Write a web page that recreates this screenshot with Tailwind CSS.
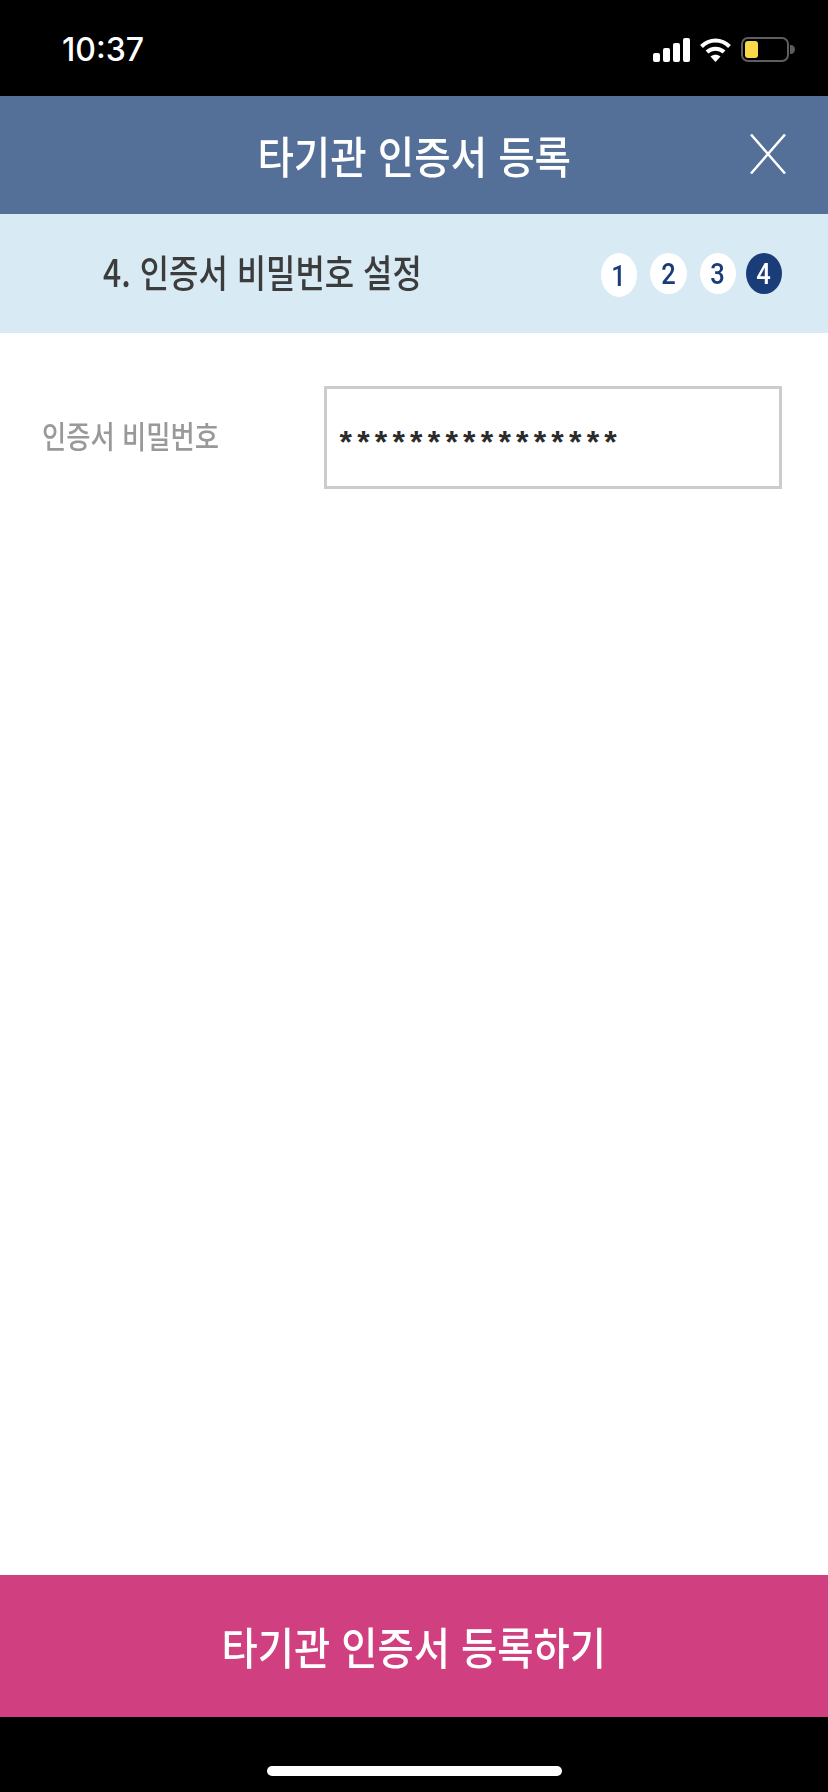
<!DOCTYPE html>
<html lang="ko">
<head>
    <meta charset="UTF-8">
    <meta name="viewport" content="width=device-width, initial-scale=1.0">
    <title>타기관 인증서 등록</title>
    <script src="https://cdn.jsdelivr.net/npm/@tailwindcss/browser@4"></script>
</head>
<body class="bg-black font-['Noto_Sans_CJK_KR','Noto_Sans',sans-serif]">
    <div class="flex flex-col w-[828px] h-[1792px] overflow-hidden">
        <!-- status bar -->
        <div class="flex items-center justify-between h-[96px] pl-[62px] pr-[33px] pt-[3px] bg-black">
            <span class="text-white text-[32px] leading-none font-medium font-['Inter',sans-serif] w-[84px]">10:37</span>
            <div class="flex items-center gap-[10px]">
                <svg width="37" height="24" viewBox="0 0 37 24" fill="#fff">
                    <rect x="0" y="15" width="7" height="9" rx="2"/>
                    <rect x="10" y="10" width="7" height="14" rx="2"/>
                    <rect x="20" y="5" width="7" height="19" rx="2"/>
                    <rect x="30" y="0" width="7" height="24" rx="2"/>
                </svg>
                <svg width="31" height="24" viewBox="0 0 31 24" fill="none" stroke="#fff" stroke-width="4">
                    <path d="M1.500 8.500C9.500 0.500 21.500 0.500 29.500 8.500"/>
                    <path d="M7 14C11.500 9.500 19.500 9.500 24 14"/>
                    <path d="M15.500 24L10.500 18.500C13.500 16 17.500 16 20.500 18.500Z" fill="#fff" stroke="none"/>
                </svg>
                <div class="flex items-center">
                    <div class="w-[48px] h-[25px] rounded-[7px] border-2 border-[#5e5e5e] p-[2px] flex">
                        <div class="w-[13px] h-full rounded-[3px] bg-[#fbd84a]"></div>
                    </div>
                    <div class="w-[5px] h-[9px] ml-[1px] rounded-r-full bg-[#5e5e5e]"></div>
                </div>
            </div>
        </div>

        <!-- title bar -->
        <div class="relative flex items-center justify-center h-[118px] bg-[#546f98]">
            <h1 class="text-white text-[44px] font-medium leading-none scale-x-[0.9] blur-[0.5px]">타기관 인증서 등록</h1>
            <button class="absolute right-[42px] top-[38px]">
                <svg class="block" width="36" height="40" viewBox="0 0 36 40" fill="none" stroke="#fff" stroke-width="2.500">
                    <path d="M1 0.500L35 39.500M35 0.500L1 39.500"/>
                </svg>
            </button>
        </div>

        <!-- step bar -->
        <div class="flex items-center justify-between h-[119px] pl-[103px] pr-[46px] bg-[#d8eaf3]">
            <h2 class="text-[#3c3c3c] text-[38px] font-medium leading-none origin-left scale-x-[0.84] blur-[0.5px] pb-[6px]">4. 인증서 비밀번호 설정</h2>
            <div class="flex items-start gap-[13px] pt-[3px]">
                <span class="flex items-center justify-center w-[36px] h-[44px] rounded-[50%] bg-white text-[#1a3c78] text-[30px] font-['Roboto',sans-serif]"><span class="scale-x-[0.85] font-medium">1</span></span>
                <span class="flex items-center justify-center w-[37px] h-[41px] rounded-[50%] bg-white text-[#1a3c78] text-[30px] font-['Roboto',sans-serif]"><span class="scale-x-[0.85] font-medium">2</span></span>
                <span class="flex items-center justify-center w-[36px] h-[41px] rounded-[50%] bg-white text-[#1a3c78] text-[30px] font-['Roboto',sans-serif]"><span class="scale-x-[0.85] font-medium">3</span></span>
                <span class="flex items-center justify-center w-[36px] h-[41px] -ml-[3px] rounded-[50%] bg-[#1a3c78] text-white text-[30px] font-['Roboto',sans-serif]"><span class="scale-x-[0.85] font-medium">4</span></span>
            </div>
        </div>

        <!-- form -->
        <main class="flex-1 bg-white pt-[53px] pl-[42px] pr-[46px]">
            <div class="flex items-center">
                <label class="w-[281.500px] text-[#999999] text-[31px] font-medium leading-none origin-left scale-x-[0.85] blur-[0.4px] pb-[6px]">인증서 비밀번호</label>
                <div class="flex items-center flex-1 h-[103px] pl-[13px] border-[3px] border-[#cccccc] bg-white">
                    <span class="text-[#2b2b2b] text-[32px] leading-none tracking-[5.200px] font-['Liberation_Sans',sans-serif] font-bold pt-[8px]">****************</span>
                </div>
            </div>
        </main>

        <!-- submit -->
        <button class="flex items-center justify-center h-[142px] w-full bg-[#d03f7f] text-white text-[44px] font-medium leading-none">
            <span class="scale-x-[0.895] blur-[0.4px]">타기관 인증서 등록하기</span>
        </button>

        <!-- home indicator -->
        <div class="flex justify-center h-[75px] pt-[49px] bg-black">
            <div class="w-[295px] h-[10px] rounded-full bg-white"></div>
        </div>
    </div>
</body>
</html>
